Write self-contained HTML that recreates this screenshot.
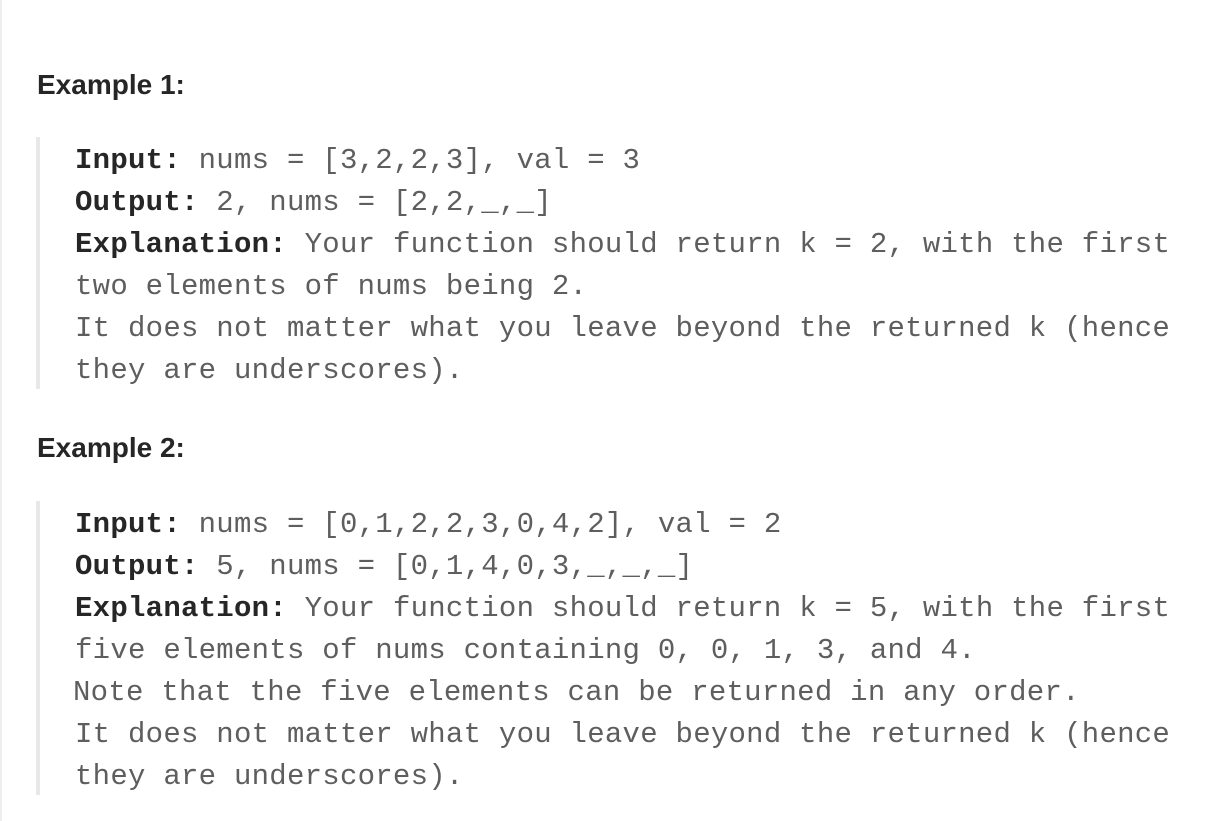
<!DOCTYPE html>
<html><head><meta charset="utf-8"><style>
html,body{margin:0;padding:0;background:#fff;width:1213px;height:821px;overflow:hidden;position:relative}
.lb{position:absolute;left:0;top:0;width:2px;height:821px;background:#eeeeee}
h3{position:absolute;left:37px;margin:0;font:bold 28px/34px "Liberation Sans",sans-serif;color:#262626}
.blk{position:absolute;left:36px;width:1170px;border-left:4px solid #e8e8e8;padding-left:35px;box-sizing:border-box}
.blk div{font:29px/42px "Liberation Mono",monospace;letter-spacing:0.26px;color:#5e5e5e;white-space:pre;position:relative;top:3px}
b{color:#262626;font-weight:bold}
</style></head><body>
<div class="lb"></div>
<h3 style="top:68px">Example 1:</h3>
<div class="blk" style="top:137px">
<div><b>Input:</b> nums = [3,2,2,3], val = 3</div>
<div><b>Output:</b> 2, nums = [2,2,_,_]</div>
<div><b>Explanation:</b> Your function should return k = 2, with the first</div>
<div>two elements of nums being 2.</div>
<div>It does not matter what you leave beyond the returned k (hence</div>
<div>they are underscores).</div>
</div>
<h3 style="top:431px">Example 2:</h3>
<div class="blk" style="top:501px">
<div><b>Input:</b> nums = [0,1,2,2,3,0,4,2], val = 2</div>
<div><b>Output:</b> 5, nums = [0,1,4,0,3,_,_,_]</div>
<div><b>Explanation:</b> Your function should return k = 5, with the first</div>
<div>five elements of nums containing 0, 0, 1, 3, and 4.</div>
<div style="margin-left:-2px">Note that the five elements can be returned in any order.</div>
<div>It does not matter what you leave beyond the returned k (hence</div>
<div>they are underscores).</div>
</div>
</body></html>
